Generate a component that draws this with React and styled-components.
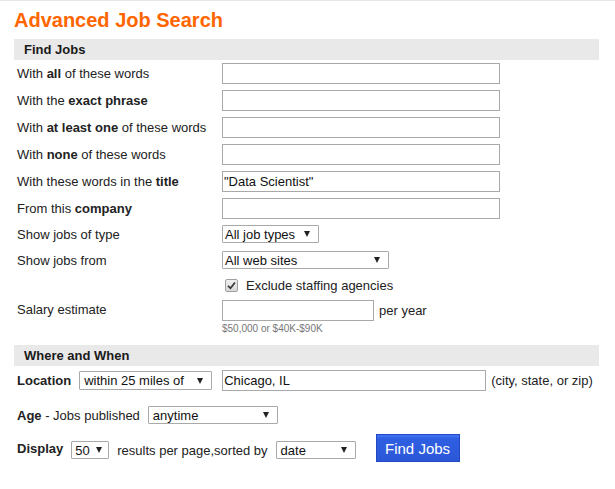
import React from 'react';
import styled, { createGlobalStyle } from 'styled-components';

const GlobalStyle = createGlobalStyle`
  html, body {
    margin: 0;
    padding: 0;
    background: #fff;
  }
  body {
    border-top: 1px solid #e6e6e6;
    font-family: "Liberation Sans", Arial, sans-serif;
    font-size: 13px;
    color: #222;
  }
`;

const Page = styled.div`
  width: 585px;
  padding: 0 0 20px 14px;
`;

const Title = styled.h1`
  margin: 7px 0 7px 0;
  font-size: 20px;
  line-height: 24px;
  font-weight: bold;
  color: #ff6600;
`;

const SectionBar = styled.div`
  height: 21px;
  line-height: 21px;
  padding-left: 10px;
  margin-top: ${p => p.$top || 0}px;
  background: #e9e9e9;
  font-weight: bold;
  font-size: 13px;
  color: #1a1a1a;
`;

const Row = styled.div`
  display: grid;
  grid-template-columns: 205px 1fr;
  align-items: center;
  padding-left: 3px;
  padding-top: ${p => p.$top || 0}px;
`;

const Label = styled.div`
  line-height: 15px;
  white-space: nowrap;
  margin-top: ${p => p.$shift || 0}px;
`;

const Controls = styled.div`
  display: flex;
  align-items: center;
  gap: 5px;
`;

const TextInput = styled.input`
  box-sizing: border-box;
  width: ${p => p.$w}px;
  height: 21px;
  border: 1px solid #a9a9a9;
  padding: 0 1px;
  margin: 0 0 0 ${p => p.$ml || 0}px;
  font-family: "Liberation Sans", Arial, sans-serif;
  font-size: 13px;
  color: #111;
  background: #fff;
  outline: none;
`;

const SelectBox = styled.div`
  box-sizing: border-box;
  display: inline-flex;
  align-items: center;
  justify-content: space-between;
  width: ${p => p.$w}px;
  height: ${p => p.$h || 18}px;
  margin-top: ${p => p.$mt || 0}px;
  padding: 0 ${p => p.$pr || 8}px 0 ${p => p.$pl || 2}px;
  border: 1px solid #a9a9a9;
  border-radius: 1px;
  background: #fff;
  font-size: 13px;
  color: #111;
  white-space: nowrap;
  flex-shrink: 0;
`;

const Arrow = styled.span`
  width: 0;
  height: 0;
  border-left: 3px solid transparent;
  border-right: 3px solid transparent;
  border-top: 6px solid #222;
`;

const CheckRow = styled.label`
  display: flex;
  align-items: center;
  gap: 8px;
  line-height: 15px;
  padding-left: 3px;
  font-size: 13px;
`;

const CheckBox = styled.span`
  box-sizing: border-box;
  width: 13px;
  height: 13px;
  border: 1px solid #a0a0a0;
  border-radius: 2px;
  background: linear-gradient(#f0f0f0, #d8d8d8);
  display: inline-flex;
  align-items: center;
  justify-content: center;
`;

const Hint = styled.div`
  font-size: 10px;
  line-height: 12px;
  color: #777;
`;

const Note = styled.span`
  white-space: nowrap;
  color: #222;
  margin-top: ${p => p.$shift || 0}px;
`;

const InlineRow = styled.div`
  display: flex;
  align-items: center;
  padding-left: 3px;
  padding-top: ${p => p.$top || 0}px;
  gap: 8px;
  white-space: nowrap;
`;

const FindButton = styled.button`
  box-sizing: border-box;
  width: 84px;
  height: 28px;
  margin-left: 12px;
  border: 1px solid #2349c2;
  background: linear-gradient(#3d6ff0 0, #3d6ff0 2px, #2f5fe2 3px, #2b58d8 100%);
  color: #fff;
  font-family: "Liberation Sans", Arial, sans-serif;
  font-size: 15px;
  padding: 0;
`;

function Select({ w, h, mt, pl, pr, children }) {
  return (
    <SelectBox $w={w} $h={h} $mt={mt} $pl={pl} $pr={pr}>
      <span>{children}</span>
      <Arrow />
    </SelectBox>
  );
}

const textRows = [
  [<>With <b>all</b> of these words</>, ''],
  [<>With the <b>exact phrase</b></>, ''],
  [<>With <b>at least one</b> of these words</>, ''],
  [<>With <b>none</b> of these words</>, ''],
  [<>With these words in the <b>title</b></>, '"Data Scientist"'],
  [<>From this <b>company</b></>, ''],
];

export default function App() {
  return (
    <>
      <GlobalStyle />
      <Page>
        <Title>Advanced Job Search</Title>
        <SectionBar>Find Jobs</SectionBar>

        {textRows.map(([label, value], i) => (
          <Row key={i} $top={i === 0 ? 3 : 6}>
            <Label>{label}</Label>
            <Controls>
              <TextInput $w={278} defaultValue={value} />
            </Controls>
          </Row>
        ))}

        <Row $top={6}>
          <Label>Show jobs of type</Label>
          <Controls>
            <Select w={97}>All job types</Select>
          </Controls>
        </Row>
        <Row $top={8}>
          <Label>Show jobs from</Label>
          <Controls>
            <Select w={167}>All web sites</Select>
          </Controls>
        </Row>
        <Row $top={9}>
          <Label />
          <CheckRow>
            <CheckBox>
              <svg width="9" height="9" viewBox="0 0 9 9">
                <path d="M1 4.8 L3.5 7.2 L8 1.5" fill="none" stroke="#3a3a3a" strokeWidth="1.8" />
              </svg>
            </CheckBox>
            Exclude staffing agencies
          </CheckRow>
        </Row>
        <Row $top={7}>
          <Label $shift={-3}>Salary estimate</Label>
          <Controls>
            <TextInput $w={152} />
            <Note>per year</Note>
          </Controls>
        </Row>
        <Row $top={2}>
          <Label />
          <Hint>$50,000 or $40K-$90K</Hint>
        </Row>

        <SectionBar $top={10}>Where and When</SectionBar>

        <InlineRow $top={4}>
          <b>Location</b>
          <Select w={133} h={19} pl={4}>within 25 miles of</Select>
          <Controls>
            <TextInput $w={264} $ml={2} defaultValue="Chicago, IL" />
            <Note>(city, state, or zip)</Note>
          </Controls>
        </InlineRow>

        <InlineRow $top={15}>
          <span><b>Age</b> - Jobs published</span>
          <Select w={130} pl={4}>anytime</Select>
        </InlineRow>

        <InlineRow $top={10}>
          <b>Display</b>
          <Select w={38} mt={4} pl={3} pr={6}>50</Select>
          <Note $shift={4}>results per page,sorted by</Note>
          <Select w={80} mt={4} pl={4}>date</Select>
          <FindButton>Find Jobs</FindButton>
        </InlineRow>
      </Page>
    </>
  );
}
